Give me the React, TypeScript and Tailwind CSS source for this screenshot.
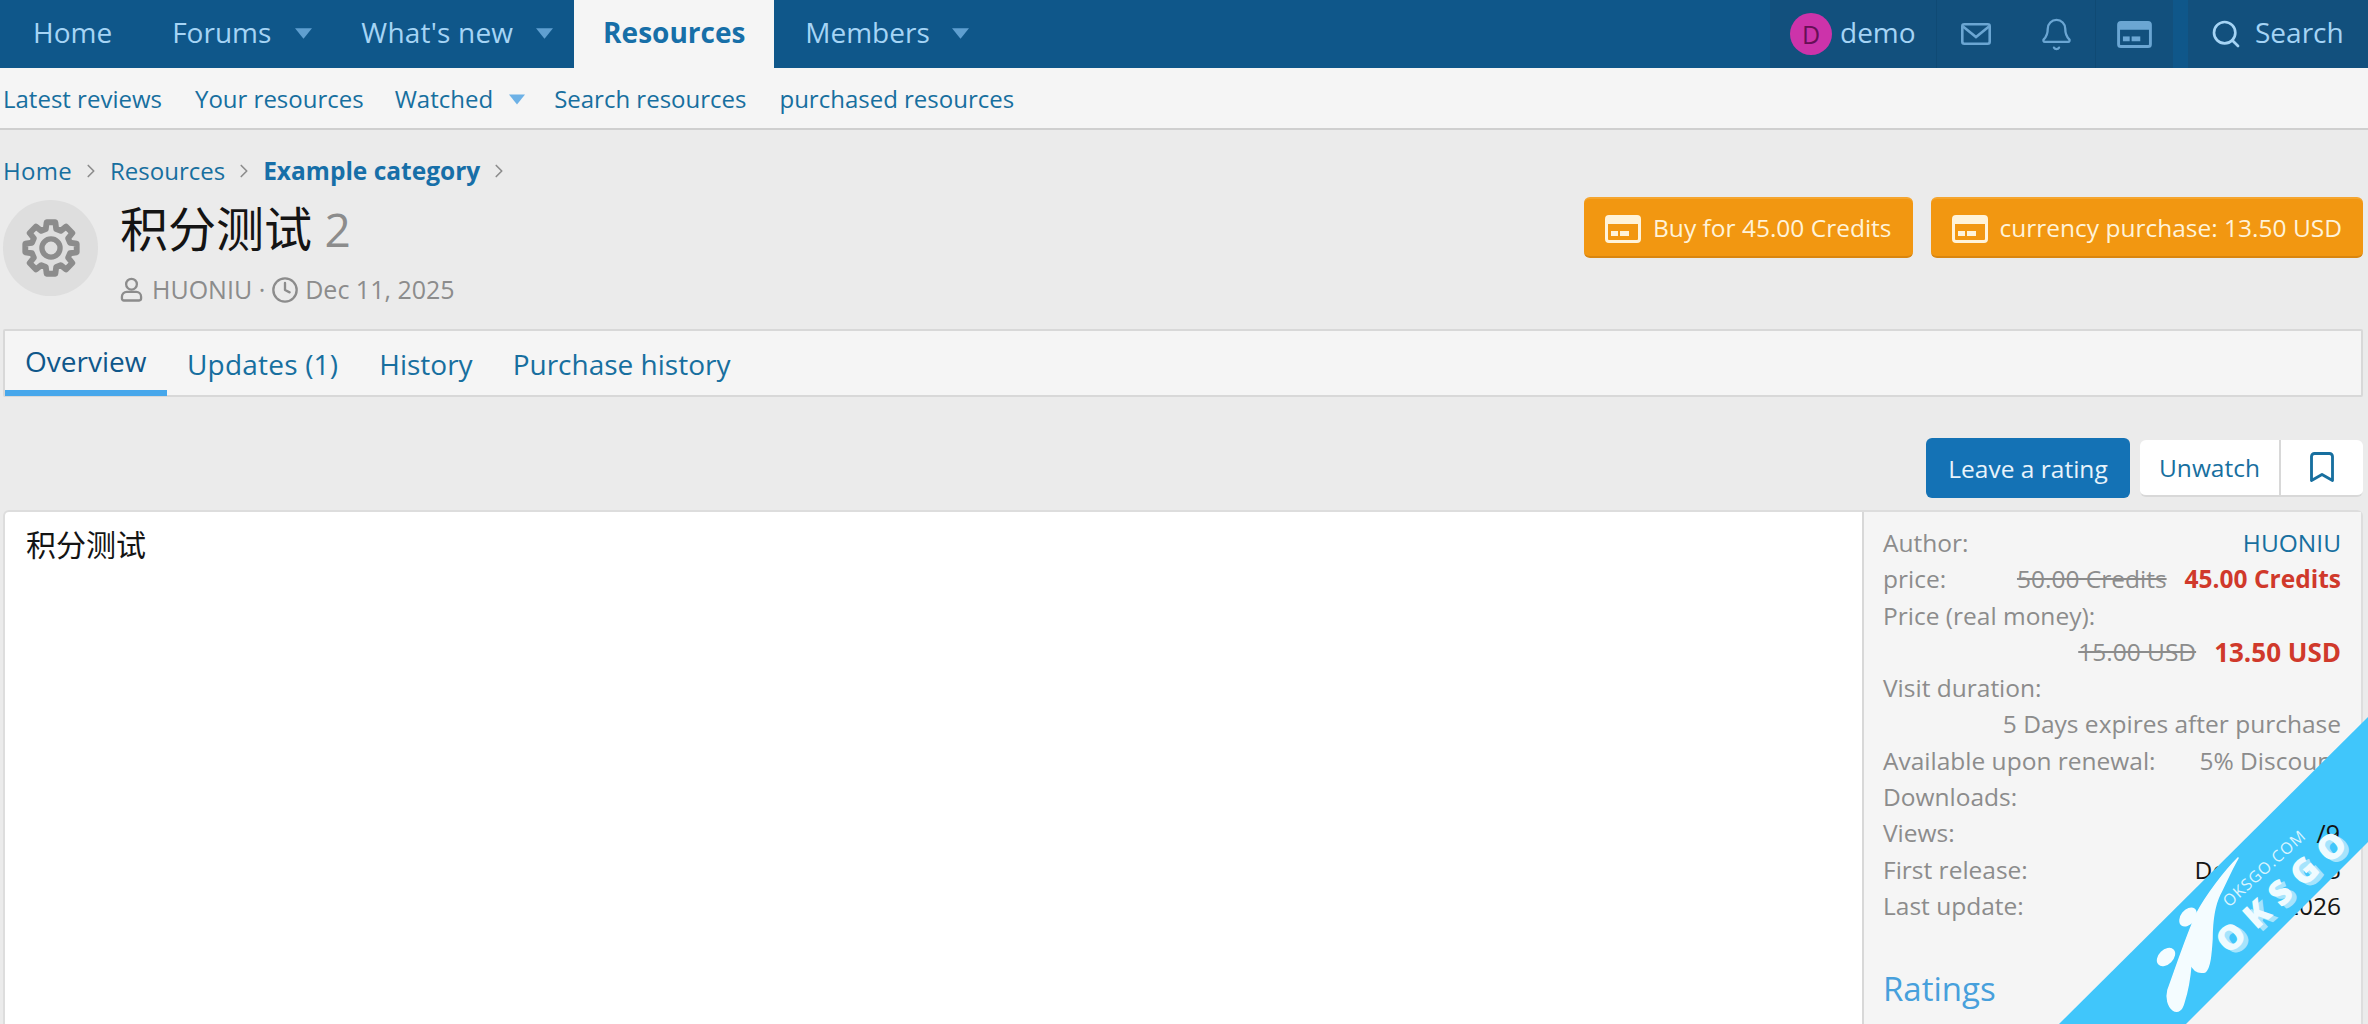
import React from 'react';
import { Bell, Bookmark, ChevronRight, Clock, Search } from 'lucide-react';

const FONT = '"Open Sans", "Noto Sans CJK SC", sans-serif';

const Caret = ({ className = '' }: { className?: string }) => (
  <svg viewBox="0 0 16 10" className={`h-[11px] ${className}`}>
    <path d="M0 0h16L8 10z" fill="currentColor" />
  </svg>
);

const CardIcon = ({ className = '' }: { className?: string }) => (
  <svg viewBox="0 0 36 28" className={className}>
    <path
      fillRule="evenodd"
      fill="currentColor"
      d="M4 0h28a4 4 0 0 1 4 4v20a4 4 0 0 1-4 4H4a4 4 0 0 1-4-4V4a4 4 0 0 1 4-4zM3 9v15a1 1 0 0 0 1 1h28a1 1 0 0 0 1-1V9z"
    />
    <rect x="6" y="16" width="7" height="5" fill="currentColor" />
    <rect x="15" y="16" width="9" height="5" fill="currentColor" />
  </svg>
);

const MailIcon = ({ className = '' }: { className?: string }) => (
  <svg viewBox="0 0 30 22" className={className} fill="none" stroke="currentColor" strokeWidth="2.6">
    <rect x="1.3" y="1.3" width="27.4" height="19.4" rx="2" />
    <path d="M2 3.5 15 14 28 3.5" />
  </svg>
);

const UserIcon = ({ className = '' }: { className?: string }) => (
  <svg viewBox="0 0 24 26" className={className} fill="none" stroke="currentColor" strokeWidth="2.4">
    <circle cx="12" cy="7.5" r="5.6" />
    <path d="M7 15.5h10a5 5 0 0 1 5 5v2a2 2 0 0 1-2 2H4a2 2 0 0 1-2-2v-2a5 5 0 0 1 5-5z" />
  </svg>
);

// 8 tooth gear, drawn as an outlined polygon
const gearPoints = Array.from({ length: 8 }, (_, i) => {
  const a = (i * Math.PI) / 4 - Math.PI / 2;
  const pt = (r: number, d: number) =>
    `${(30 + r * Math.cos(a + d)).toFixed(1)},${(30 + r * Math.sin(a + d)).toFixed(1)}`;
  return [pt(18.5, -0.27), pt(24.5, -0.17), pt(24.5, 0.17), pt(18.5, 0.27)].join(' ');
}).join(' ');

const GearIcon = ({ className = '' }: { className?: string }) => (
  <svg viewBox="0 0 60 60" className={className} fill="none" stroke="currentColor">
    <polygon points={gearPoints} strokeWidth="5.5" strokeLinejoin="round" />
    <circle cx="30" cy="30" r="8.5" strokeWidth="5" />
  </svg>
);

const Row = ({ label, children }: { label: string; children?: React.ReactNode }) => (
  <div className="flex justify-between h-[36.3px] items-center whitespace-nowrap">
    <span className="text-[#8c8c8c]">{label}</span>
    {children}
  </div>
);

const Watermark = () => (
  <svg viewBox="0 0 320 310" className="absolute right-0 bottom-0 w-[320px] h-[310px]">
    <polygon points="320,3 11,310 138,310 320,128" fill="#40c6fb" />
    <text x="292" y="129" fontSize="25" fill="#141414" textAnchor="end" fontFamily={FONT}>/9</text>
    <g fill="#f4fcff" stroke="#f4fcff" strokeWidth="1.5" strokeLinejoin="round">
      <path d="M190 144C176 158 158 182 149 199 140 218 128 254 120 276 118 284 120 292 125 296 130 299 134 296 136 288 140 276 142 262 143 250 146 258 152 259 157 258 162 254 163 240 164 225 164 210 166 192 172 180 178 168 184 154 190 144z" />
      <ellipse cx="140" cy="203" rx="6.5" ry="10" transform="rotate(38 140 203)" />
      <ellipse cx="118" cy="243" rx="6.5" ry="10" transform="rotate(45 118 243)" />
    </g>
    <g fontFamily={FONT} textAnchor="middle">
      <text x="216" y="160" fontSize="16" letterSpacing="1" fill="#d8f4ff" transform="rotate(-42 216 154)">OKSGO.COM</text>
      <text x="238" y="192" fontSize="34" fontWeight="800" letterSpacing="10" fill="#a6e4fc" transform="rotate(-42 236 174)">OKSGO</text>
      <text x="236" y="187" fontSize="34" fontWeight="800" letterSpacing="10" fill="#effbff" transform="rotate(-42 236 174)">OKSGO</text>
    </g>
  </svg>
);

const App: React.FC = () => {
  return (
    <div
      className="relative h-screen overflow-hidden bg-[#ebebeb] text-[24.5px] leading-[1.4] text-[#141414]"
      style={{ fontFamily: FONT }}
    >
      {/* top nav */}
      <header className="flex justify-between h-[68px] bg-[#0f578a] text-[28px] text-[#a5d4f5]">
        <nav className="flex items-stretch">
          <div className="flex items-center pb-[2px] pl-[33px] pr-[27px]">Home</div>
          <div className="flex items-center pb-[2px] pl-[33px] pr-[16px]">
            Forums
            <Caret className="ml-[24px] w-[17px] text-[#5f9fd0]" />
          </div>
          <div className="flex items-center pb-[2px] pl-[33px] pr-[21px]">
            <span className="tracking-[0.2px]">What's new</span>
            <Caret className="ml-[23px] w-[17px] text-[#5f9fd0]" />
          </div>
          <div className="flex items-center justify-center w-[200px] pb-[2px] bg-[#f5f5f5] text-[#176fa8] font-bold">Resources</div>
          <div className="flex items-center pb-[2px] pl-[31px]">
            Members
            <Caret className="ml-[22px] w-[17px] text-[#5f9fd0]" />
          </div>
        </nav>
        <div className="flex items-stretch">
          <div className="flex items-stretch bg-[#12507d]">
            <div className="flex items-center w-[167px] pl-[20px] border-r border-[#0f4a74]">
              <span className="flex items-center justify-center w-[42px] h-[42px] rounded-full bg-[#cc33aa] text-[#660f55] text-[25px]">D</span>
              <span className="ml-[8px] pb-[2px]">demo</span>
            </div>
            <div className="flex items-center w-[159px] border-r border-[#0f4a74]">
              <MailIcon className="ml-[24px] w-[30px] h-[22px] text-[#6ba6d3]" />
              <Bell className="ml-[48px] w-[35px] h-[35px] text-[#6ba6d3]" strokeWidth={1.6} />
            </div>
            <div className="flex items-center justify-center w-[77px]">
              <CardIcon className="w-[35px] h-[27px] text-[#6ba6d3]" />
            </div>
          </div>
          <div className="flex items-center w-[180px] ml-[15px] pl-[22px] bg-[#12507d]">
            <Search className="w-[32px] h-[32px] text-[#a5d4f5]" strokeWidth={2} />
            <span className="ml-[13px] pb-[2px]">Search</span>
          </div>
        </div>
      </header>

      {/* sub nav */}
      <div className="flex items-center gap-[33px] h-[62px] pl-[3px] pt-[2px] bg-[#f5f5f5] border-b-2 border-[#cfcfcf] text-[24px] text-[#176f9f]">
        <span>Latest reviews</span>
        <span>Your resources</span>
        <div className="flex items-center -ml-[2px] -mr-[4px]">
          <span>Watched</span>
          <Caret className="ml-[16px] w-[16px] text-[#6db1e6]" />
        </div>
        <span>Search resources</span>
        <span>purchased resources</span>
      </div>

      <main className="pl-[3px] pr-[5px]">
        {/* breadcrumb */}
        <div className="flex items-center h-[34px] mt-[24px] text-[24px] text-[#176f9f]">
          <span className="tracking-[0.3px]">Home</span>
          <ChevronRight className="mx-[8px] w-[22px] h-[22px] text-[#8c8c8c]" strokeWidth={1.8} />
          <span>Resources</span>
          <ChevronRight className="mx-[8px] w-[22px] h-[22px] text-[#8c8c8c]" strokeWidth={1.8} />
          <span className="font-bold text-[24.5px] text-[#176fa8]">Example category</span>
          <ChevronRight className="mx-[8px] w-[22px] h-[22px] text-[#8c8c8c]" strokeWidth={1.8} />
        </div>

        {/* title */}
        <div className="flex justify-between mt-[12px] h-[96px]">
          <div className="flex">
            <div className="flex items-center justify-center w-[95px] h-[96px] rounded-full bg-[#dedede]">
              <GearIcon className="w-[64px] h-[64px] text-[#8c8c8c]" />
            </div>
            <div className="ml-[22px]">
              <h1 className="text-[48px] leading-[60px] -mt-[1px] font-normal">
                积分测试 <span className="text-[#8c8c8c] text-[46px]">2</span>
              </h1>
              <div className="flex items-center mt-[13px] text-[25px] text-[#8c8c8c]">
                <UserIcon className="w-[23px] h-[25px] mr-[9px]" />
                HUONIU ·
                <Clock className="w-[28px] h-[28px] mx-[6px]" strokeWidth={2} />
                Dec 11, 2025
              </div>
            </div>
          </div>
          <div className="flex gap-[18px] -mt-[3px] text-[#fff3d9]">
            <button className="flex items-center h-[61px] px-[21px] pt-[2px] rounded-[6px] bg-[#f29711] border-t-2 border-b-2 border-t-[#f5a52e] border-b-[#d98610]">
              <CardIcon className="w-[36px] h-[28px] mr-[12px]" />
              Buy for 45.00 Credits
            </button>
            <button className="flex items-center h-[61px] px-[21px] pt-[2px] rounded-[6px] bg-[#f29711] border-t-2 border-b-2 border-t-[#f5a52e] border-b-[#d98610]">
              <CardIcon className="w-[36px] h-[28px] mr-[12px]" />
              currency purchase: 13.50 USD
            </button>
          </div>
        </div>

        {/* tabs */}
        <div className="flex mt-[33px] h-[68px] bg-[#f5f5f5] border-2 border-[#d8d8d8] text-[28px] text-[#176f9f] rounded-[2px]">
          <div className="flex items-center w-[162px] pl-[20px] pt-[3px] text-[#0f578a] border-b-[6px] border-[#47a7eb] -mb-[1px]">Overview</div>
          <div className="flex items-center pl-[20px] pr-[21px] pt-[4px] tracking-[0.2px]">Updates (1)</div>
          <div className="flex items-center px-[20px] pt-[4px]">History</div>
          <div className="flex items-center px-[20px] pt-[4px]">Purchase history</div>
        </div>

        {/* actions */}
        <div className="flex justify-end items-center gap-[10px] mt-[41px] h-[60px]">
          <button className="h-[60px] w-[204px] pt-[2px] rounded-[6px] bg-[#1472b5] text-[#e8f3fb]">Leave a rating</button>
          <div className="flex h-[57px] w-[223px] bg-white rounded-[6px] border-b-2 border-[#d8d8d8] text-[#176f9f]">
            <button className="w-[141px] pt-[2px] border-r-2 border-[#d8d8d8]">Unwatch</button>
            <button className="flex flex-1 items-center justify-center">
              <Bookmark className="w-[36px] h-[38px]" strokeWidth={1.9} />
            </button>
          </div>
        </div>

        {/* body */}
        <div className="flex mt-[12px] h-[600px] bg-white rounded-t-[6px] border-2 border-[#dddddd]">
          <div className="flex-1 pl-[21px] pt-[12px] text-[30px] leading-[42px]">积分测试</div>
          <aside className="w-[499px] pl-[19px] pr-[20px] pt-[13px] bg-[#f5f5f5] border-l-2 border-[#d8d8d8]">
            <Row label="Author:">
              <span className="text-[#176f9f]">HUONIU</span>
            </Row>
            <Row label="price:">
              <span>
                <s className="text-[#8c8c8c]">50.00 Credits</s>
                <b className="ml-[18px] text-[#d0392b]">45.00 Credits</b>
              </span>
            </Row>
            <Row label="Price (real money):" />
            <div className="flex justify-end items-center h-[36.3px]">
              <s className="text-[#8c8c8c]">15.00 USD</s>
              <b className="ml-[18px] text-[26px] text-[#d0392b]">13.50 USD</b>
            </div>
            <Row label="Visit duration:" />
            <div className="flex justify-end items-center h-[36.3px] text-[#8c8c8c]">5 Days expires after purchase</div>
            <Row label="Available upon renewal:">
              <span className="text-[#8c8c8c]">5% Discount</span>
            </Row>
            <Row label="Downloads:">
              <span>0</span>
            </Row>
            <Row label="Views:">
              <span>79</span>
            </Row>
            <Row label="First release:">
              <span>Dec 11, 2025</span>
            </Row>
            <Row label="Last update:">
              <span>Jan 17, 2026</span>
            </Row>
            <h3 className="mt-[42px] text-[33px] leading-[46px] font-normal text-[#47a0dc]">Ratings</h3>
          </aside>
        </div>
      </main>

      <Watermark />
    </div>
  );
};

export default App;
